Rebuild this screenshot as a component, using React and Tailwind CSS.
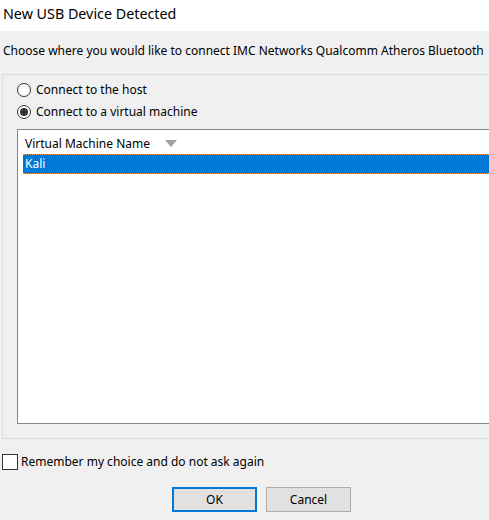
import { useState } from "react";

function Radio({ checked, label, onClick }) {
    return (
        <div onClick={onClick} className="flex items-center h-[14px] cursor-default">
            <span className="w-[14px] h-[14px] rounded-full border border-[#333] bg-white flex items-center justify-center">
                {checked && <span className="w-[8px] h-[8px] rounded-full bg-[#333]" />}
            </span>
            <span className="ml-[5px] text-[#000]">{label}</span>
        </div>
    );
}

export default function App() {
    const [target, setTarget] = useState("vm");
    const [remember, setRemember] = useState(false);

    return (
        <div className="w-[489px] h-[520px] bg-[#f0f0f0] overflow-hidden text-[12px] leading-none text-black"
            style={{ fontFamily: '"Noto Sans", "Open Sans", sans-serif' }}>
            <div className="h-[31px] bg-white pl-[3px] pt-[7px] text-[14.3px] whitespace-nowrap">
                New USB Device Detected
            </div>

            <div className="pl-[3px] pt-[14px] h-[43px] whitespace-nowrap">
                Choose where you would like to connect IMC Networks Qualcomm Atheros Bluetooth
            </div>

            <div className="ml-[2px] border border-[#dcdcdc] border-r-0 h-[365px] pt-[8px] pl-[14px]">
                <div className="flex flex-col gap-[8px]">
                    <Radio checked={target === "host"} label="Connect to the host" onClick={() => setTarget("host")} />
                    <Radio checked={target === "vm"} label="Connect to a virtual machine" onClick={() => setTarget("vm")} />
                </div>

                <div className="mt-[10px] h-[295px] bg-white border border-[#828790] border-r-0 flex flex-col">
                    <div className="h-[24px] flex items-center pl-[7px] pt-[3px]">
                        <span>Virtual Machine Name</span>
                        <svg width="12" height="7" viewBox="0 0 12 7" className="ml-[15px]">
                            <path d="M0 0 L12 0 L6 7 Z" fill="#a0a0a0" />
                        </svg>
                    </div>
                    <div className="ml-[5px] h-[20px] bg-[#0078d7] text-white flex items-center pl-[2px] border-y border-dotted border-[#f5a04a]">
                        Kali
                    </div>
                </div>
            </div>

            <label className="flex items-center mt-[15px] ml-[2px] h-[16px]">
                <span onClick={() => setRemember(!remember)}
                    className="w-[16px] h-[16px] border border-[#333] bg-white flex items-center justify-center">
                    {remember && (
                        <svg width="11" height="9" viewBox="0 0 11 9">
                            <path d="M1 4.5 L4 7.5 L10 1" stroke="#000" strokeWidth="1.5" fill="none" />
                        </svg>
                    )}
                </span>
                <span className="ml-[3px]">Remember my choice and do not ask again</span>
            </label>

            <div className="flex mt-[17px] ml-[172px] gap-[9px]">
                <button className="w-[85px] h-[25px] bg-[#e1e1e1] border-2 border-[#0078d7] text-[12px]">OK</button>
                <button className="w-[85px] h-[25px] bg-[#e1e1e1] border border-[#adadad] text-[12px]">Cancel</button>
            </div>
        </div>
    );
}
